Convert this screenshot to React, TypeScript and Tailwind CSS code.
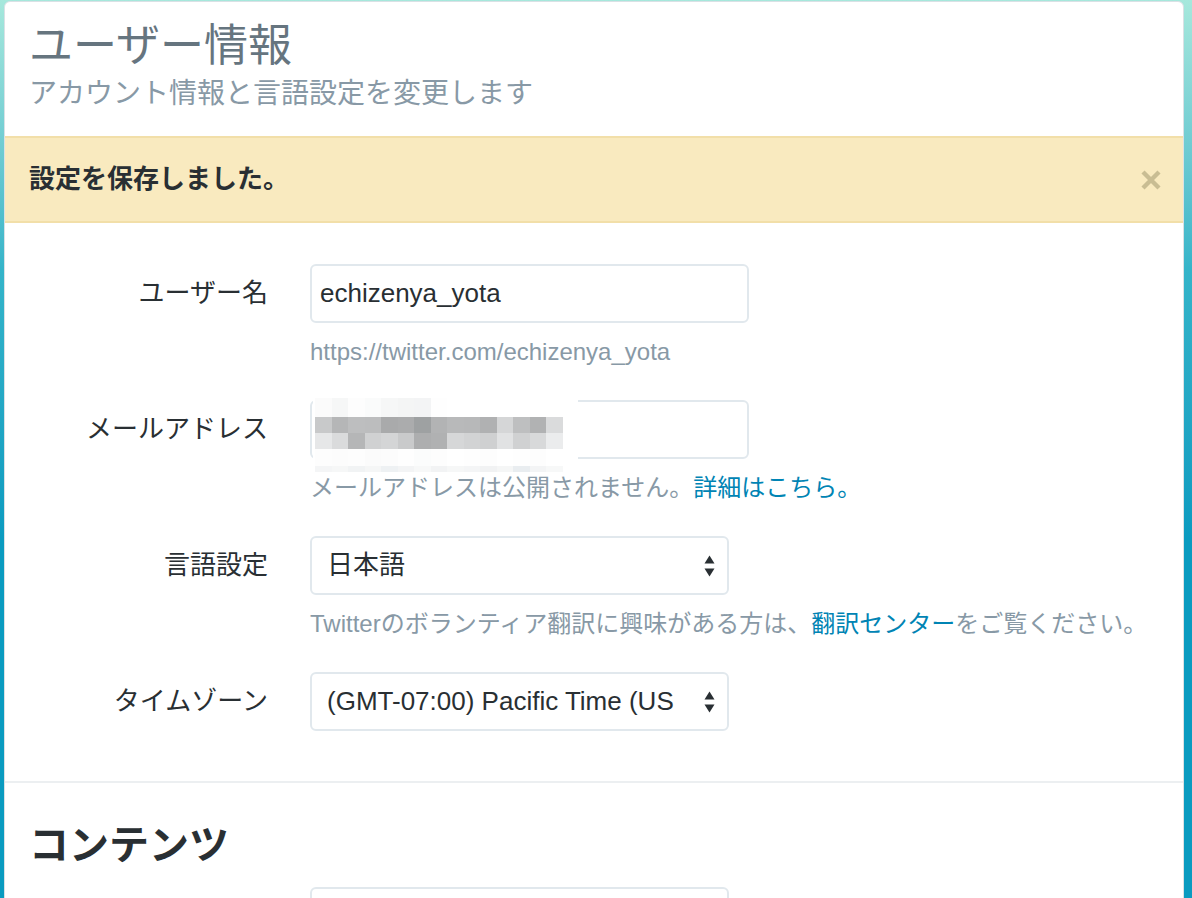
import React from 'react';

const FONT = "font-['Liberation_Sans','Noto_Sans_CJK_JP',sans-serif]";

// mosaic that hides the e-mail address
const mosaicRows: { h: string; cells: string[] }[] = [
  {
    h: 'h-[19px]',
    cells: [
      'bg-[#fbfbfb]', 'bg-[#f6f7f7]', 'bg-[#fdfdfd]', 'bg-[#fafbfb]', 'bg-[#f6f7f7]',
      'bg-[#f4f5f5]', 'bg-[#f3f4f5]', 'bg-[#fefefe]', 'bg-[#ffffff]', 'bg-[#ffffff]',
      'bg-[#ffffff]', 'bg-[#ffffff]', 'bg-[#ffffff]', 'bg-[#ffffff]', 'bg-[#ffffff]',
    ],
  },
  {
    h: 'h-[16px]',
    cells: [
      'bg-[#c8c9ca]', 'bg-[#b5b6b7]', 'bg-[#bdbebf]', 'bg-[#bcbdbe]', 'bg-[#a9aaab]',
      'bg-[#abacad]', 'bg-[#9ea1a2]', 'bg-[#b2b3b4]', 'bg-[#b8b9ba]', 'bg-[#b7b8b9]',
      'bg-[#b0b1b2]', 'bg-[#d5d6d7]', 'bg-[#bebfc0]', 'bg-[#b1b2b3]', 'bg-[#dadbdc]',
    ],
  },
  {
    h: 'h-[16px]',
    cells: [
      'bg-[#e6e7e8]', 'bg-[#dadbdc]', 'bg-[#b5b6b7]', 'bg-[#d0d1d2]', 'bg-[#d4d5d6]',
      'bg-[#c9cacb]', 'bg-[#adaeaf]', 'bg-[#b0b1b2]', 'bg-[#d6d7d8]', 'bg-[#d2d3d4]',
      'bg-[#cfd0d1]', 'bg-[#e1e2e3]', 'bg-[#d0d1d2]', 'bg-[#d8d9da]', 'bg-[#ebeced]',
    ],
  },
  {
    h: 'h-[17px]',
    cells: [
      'bg-[#fdfdfd]', 'bg-[#fcfcfc]', 'bg-[#fdfdfd]', 'bg-[#fbfbfb]', 'bg-[#fcfcfc]',
      'bg-[#fefefe]', 'bg-[#fbfcfc]', 'bg-[#fdfdfd]', 'bg-[#ffffff]', 'bg-[#fefefe]',
      'bg-[#fdfdfd]', 'bg-[#ffffff]', 'bg-[#fefefe]', 'bg-[#fdfdfd]', 'bg-[#ffffff]',
    ],
  },
  {
    h: 'h-[6px]',
    cells: [
      'bg-[#f4f5f6]', 'bg-[#f6f7f7]', 'bg-[#f1f3f4]', 'bg-[#f5f6f6]', 'bg-[#eef1f3]',
      'bg-[#f3f4f5]', 'bg-[#f7f8f8]', 'bg-[#f2f3f4]', 'bg-[#f6f7f7]', 'bg-[#f4f5f6]',
      'bg-[#f1f2f3]', 'bg-[#f5f6f6]', 'bg-[#e9edf0]', 'bg-[#f3f4f5]', 'bg-[#f7f8f8]',
    ],
  },
];

const SelectArrows: React.FC = () => (
  <svg width="11" height="22" viewBox="0 0 11 22" className="shrink-0">
    <path d="M5.5 0.5 L10.5 8.5 L0.5 8.5 Z" fill="#292f33" />
    <path d="M0.5 13.5 L10.5 13.5 L5.5 21.5 Z" fill="#292f33" />
  </svg>
);

const Label: React.FC<{ children: React.ReactNode }> = ({ children }) => (
  <div className="w-[263px] h-[59px] flex items-center justify-end text-[26px] text-[#292f33] shrink-0">
    {children}
  </div>
);

const Help: React.FC<{ children: React.ReactNode }> = ({ children }) => (
  <p className="mt-[14px] text-[24px] leading-[30px] text-[#8899a6] whitespace-nowrap">{children}</p>
);

const App: React.FC = () => {
  return (
    <div
      className={`${FONT} min-h-screen h-[898px] overflow-hidden bg-linear-to-b from-[#a6e8dc] from-0% via-[#34b4c9] via-30% to-[#0a9bc0] to-60% pt-px pl-[4px] pr-[8px]`}
    >
      <div className="bg-white border border-[#d9e1e5] rounded-t-[6px] h-[920px]">
        {/* header */}
        <div className="pl-[24px] pt-[18px] pb-[25px]">
          <h1 className="text-[44px] leading-[52px] text-[#66757f]">ユーザー情報</h1>
          <p className="mt-[4px] text-[28px] leading-[35px] text-[#8899a6]">
            アカウント情報と言語設定を変更します
          </p>
        </div>

        {/* saved notice */}
        <div className="h-[87px] flex items-center justify-between bg-[#f9eabf] border-y-2 border-[#f2dfa9] pl-[24px] pr-[22px]">
          <span className="text-[26px] font-bold text-[#292f33]">設定を保存しました。</span>
          <svg width="20" height="20" viewBox="0 0 20 20">
            <path d="M2 2 L18 18 M18 2 L2 18" stroke="#c9bd93" strokeWidth="4.4" strokeLinecap="butt" />
          </svg>
        </div>

        {/* account form */}
        <div className="pt-[41px] pb-[17px]">
          <div className="flex mb-[33px]">
            <Label>ユーザー名</Label>
            <div className="ml-[42px]">
              <div className="w-[439px] h-[59px] border-2 border-[#e1e8ed] rounded-[6px] flex items-center pl-[8px] text-[26px] text-[#292f33]">
                echizenya_yota
              </div>
              <Help>https://twitter.com/echizenya_yota</Help>
            </div>
          </div>

          <div className="flex mb-[33px]">
            <Label>メールアドレス</Label>
            <div className="ml-[42px]">
              <div className="relative w-[439px] h-[59px] border-2 border-[#e1e8ed] rounded-[6px]">
                <div className="absolute left-[1px] top-[-4px] w-[265px] h-[74px] bg-white pl-[2px]">
                  {mosaicRows.map((row, i) => (
                    <div key={i} className={`flex ${row.h}`}>
                      {row.cells.map((c, j) => (
                        <div key={j} className={`w-[16.5px] h-full ${c}`} />
                      ))}
                    </div>
                  ))}
                </div>
              </div>
              <Help>
                メールアドレスは公開されません。<span className="text-[#0084b4]">詳細はこちら。</span>
              </Help>
            </div>
          </div>

          <div className="flex mb-[33px]">
            <Label>言語設定</Label>
            <div className="ml-[42px]">
              <div className="w-[419px] h-[59px] border-2 border-[#e1e8ed] rounded-[6px] flex items-center justify-between pl-[15px] pr-[12px] text-[26px] text-[#292f33]">
                <span>日本語</span>
                <SelectArrows />
              </div>
              <Help>
                Twitterのボランティア翻訳に興味がある方は、<span className="text-[#0084b4]">翻訳センター</span>をご覧ください。
              </Help>
            </div>
          </div>

          <div className="flex mb-[33px]">
            <Label>タイムゾーン</Label>
            <div className="ml-[42px]">
              <div className="w-[419px] h-[59px] border-2 border-[#e1e8ed] rounded-[6px] flex items-center justify-between pl-[15px] pr-[12px] text-[26px] text-[#292f33]">
                <span className="whitespace-nowrap overflow-hidden">(GMT-07:00) Pacific Time (US</span>
                <SelectArrows />
              </div>
            </div>
          </div>
        </div>

        <div className="border-t-2 border-[#eceff1]" />

        {/* content section */}
        <div className="pl-[24px] pt-[38px]">
          <h2 className="text-[40px] leading-[48px] font-bold text-[#292f33]">コンテンツ</h2>
        </div>
        <div className="flex mt-[18px]">
          <div className="w-[263px] shrink-0" />
          <div className="ml-[42px] w-[419px] h-[59px] border-2 border-[#e1e8ed] rounded-[6px]" />
        </div>
      </div>
    </div>
  );
};

export default App;
